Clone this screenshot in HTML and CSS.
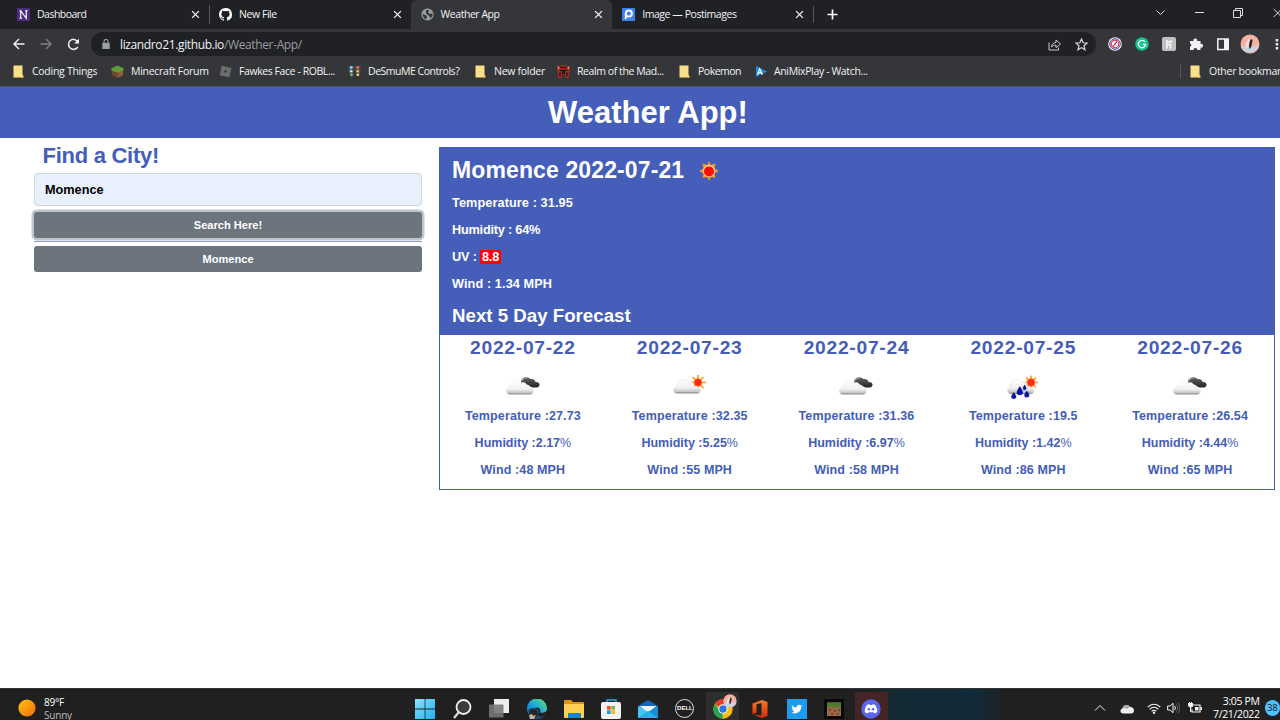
FILE: index.html
```html
<!DOCTYPE html>
<html lang="en">
<head>
<meta charset="utf-8">
<title>Weather App</title>
<link rel="stylesheet" href="styles.css">
</head>
<body>
<svg class="defs" width="0" height="0" aria-hidden="true">
  <defs>
    <linearGradient id="cloudFill" x1="0" y1="0" x2="0" y2="1"><stop offset="0" stop-color="#fff"/><stop offset=".6" stop-color="#f0f0f0"/><stop offset=".86" stop-color="#c8c8c8"/><stop offset="1" stop-color="#777"/></linearGradient>
    <linearGradient id="darkFill" x1="0" y1="0" x2="0" y2="1"><stop offset="0" stop-color="#666"/><stop offset="1" stop-color="#222"/></linearGradient>
    <linearGradient id="winFill" x1="0" y1="0" x2="1" y2="1"><stop offset="0" stop-color="#8be4fd"/><stop offset="1" stop-color="#1eaef2"/></linearGradient>
    <linearGradient id="sunFill" x1="0" y1="0" x2="1" y2="1"><stop offset="0" stop-color="#ffc60a"/><stop offset="1" stop-color="#f36a0c"/></linearGradient>
    <linearGradient id="edgeFill" x1="0" y1="1" x2="1" y2="0"><stop offset="0" stop-color="#0b62b8"/><stop offset=".5" stop-color="#1ba9df"/><stop offset="1" stop-color="#6be35f"/></linearGradient>
    <linearGradient id="officeFill" x1="0" y1="0" x2="0" y2="1"><stop offset="0" stop-color="#ff7a21"/><stop offset="1" stop-color="#d2290b"/></linearGradient>
    <symbol id="close" viewBox="0 0 8 8"><path d="M1 1l6 6M7 1L1 7" stroke="#f1f1f1" stroke-width="1.2"/></symbol>
    <symbol id="folder" viewBox="0 0 12 13"><path d="M1 .5h9v9.500l.8 1v1.500H1z" fill="#fbe08a"/><path d="M9.500 9.500l1.300 1v2H8.500z" fill="#f4c94f"/></symbol>
    <symbol id="avatar" viewBox="0 0 20 20"><circle cx="10" cy="10" r="9.500" fill="#f6b09f"/><path d="M.7 12.500C5 12 15 14 19 10.500A9.500 9.500 0 0 1 .7 12.500z" fill="#c8d2e2"/><path d="M5.500 13c0-4 2-7 4.500-9-.5 3-.5 7-3 10z" fill="#eee7e4"/><path d="M10.500 5.500c1.500-1 2.500.5 1.700 2.500-.6 2.500-.4 5-2.500 7-1-2-.8-6 .8-9.500z" fill="#26232a"/></symbol>
    <symbol id="cloudy" viewBox="0 0 36 24"><path d="M16 9a5.500 5.500 0 0 1 9.500-4c3-.5 5 1.200 5 3 2.700-.3 4.500 1.300 4 3.300-.4 2.200-3 2.500-5 2.100-3 .8-4.500-.8-6-2.300z" fill="url(#darkFill)"/><path d="M16.500 7a5 5 0 0 1 6-3" fill="none" stroke="#999" stroke-width="1.500"/><path d="M5 20.500C0 20.500-.2 14 4.500 13.800 4 8 12.500 4.800 15.500 9c4-2 6.500 1 6.500 3.500 3.500-.5 6.500 1 6.300 4.500 0 2-1.300 3.500-3.300 3.500z" fill="url(#cloudFill)" stroke="#ddd" stroke-width=".3"/></symbol>
    <symbol id="partly" viewBox="0 0 36 24"><g stroke="#ff9b1c" stroke-width="1.600"><path d="M26 1v15M18 8.500h16M20.500 3l11 11M31.500 3l-11 11"/></g><circle cx="26" cy="8.500" r="4" fill="#fd2b12" stroke="#ff9b1c" stroke-width=".7"/><path d="M5.500 19.500C.3 19.500.4 13.200 4.600 13 4.500 6.500 12.500 2.500 16.500 8c3.500-1 5.500 1.500 5.500 4 3 .2 6.500 1.200 6.300 4.500 0 2-1.300 3-3.300 3z" fill="url(#cloudFill)" stroke="#d5d5d5" stroke-width=".4"/></symbol>
    <symbol id="rainy" viewBox="0 0 36 28"><g stroke="#ff9b1c" stroke-width="1.600"><path d="M26 1.500v14M19 8.500h14M21 3.500l10 10M31 3.500l-10 10"/></g><circle cx="26" cy="8.500" r="4" fill="#fd2b12" stroke="#ff9b1c" stroke-width=".7"/><path d="M6.500 20C1.500 20 1.600 14 5 13.500 5 7 12 2.500 16.500 8c4-1 6 2 5.500 4.500 4 0 7 1.500 6.500 5 0 1.700-1.500 2.500-3.500 2.500z" fill="url(#cloudFill)" stroke="#d5d5d5" stroke-width=".4"/><path d="M14.800 12.500c4.500 6.500 3 8.500 0 8.500s-4.500-2 0-8.500zM8.800 18.500c3.500 4.500 2.500 6.300 0 6.300s-3.500-1.800 0-6.300zM21.800 17c3.500 4.500 2.500 6.300 0 6.300s-3.500-1.800 0-6.300zM19.600 11c2.500 3.500 1.500 4.800 0 4.800s-2.500-1.300 0-4.800z" fill="#0510a8" stroke="#020a60" stroke-width=".4"/></symbol>
  </defs>
</svg>
<div class="screen">
  <header class="browser">
    <div class="tabstrip">
      <div class="tab first">
        <svg class="fav" viewBox="0 0 14 14"><path d="M0 0h14v14H0z" fill="#4b2a80"/><path d="M2.500 3h2.300M4 3l6 8V3M8.600 3h3M4 3v8M2.500 11h3" stroke="#fff" stroke-width="1.200" fill="none"/></svg>
        <span class="label">Dashboard</span><svg class="x"><use href="#close"/></svg>
      </div>
      <div class="tab divided">
        <svg class="fav" viewBox="0 0 16 16"><path fill="#fff" d="M8 0C3.600 0 0 3.600 0 8c0 3.500 2.300 6.500 5.500 7.600.4.100.5-.2.500-.4v-1.400c-2.200.5-2.700-1-2.700-1-.4-1-.9-1.200-.9-1.200-.7-.5.1-.5.100-.5.800.1 1.200.8 1.200.8.700 1.300 1.900.9 2.300.7.100-.5.300-.9.500-1.100-1.800-.2-3.600-.9-3.600-4 0-.9.300-1.600.8-2.100-.1-.2-.4-1 .1-2.100 0 0 .7-.2 2.200.8a7.600 7.600 0 0 1 4 0c1.500-1 2.200-.8 2.200-.8.500 1.100.2 1.900.1 2.100.5.600.8 1.300.8 2.100 0 3.100-1.900 3.800-3.700 4 .3.300.6.800.6 1.500v2.200c0 .2.100.5.500.4A8 8 0 0 0 8 0z"/></svg>
        <span class="label">New File</span><svg class="x"><use href="#close"/></svg>
      </div>
      <div class="tab active">
        <svg class="fav globe" viewBox="0 0 14 14"><circle cx="7" cy="7" r="6.500" fill="#9aa0a6"/><path d="M2 6.500l3 1 1.500 1.500-1 3.300C3 11.500 1.500 9 2 6.500zM6 2l3 .8L7.500 5l2 1.200 2.800-.4c.5 2-.5 4-2 5.200L9 8.500 6 6.500 5 4z" fill="#35363a"/></svg>
        <span class="label">Weather App</span><svg class="x"><use href="#close"/></svg>
      </div>
      <div class="tab last">
        <svg class="fav" viewBox="0 0 14 14"><path d="M0 0h14v14H0z" fill="#3a81f0"/><circle cx="7.400" cy="6" r="3.300" fill="none" stroke="#fff" stroke-width="2"/><path d="M4 5.500v6.500" stroke="#fff" stroke-width="2"/></svg>
        <span class="label">Image — Postimages</span><svg class="x"><use href="#close"/></svg>
      </div>
      <div class="newtab"><svg width="11" height="11" viewBox="0 0 11 11"><path d="M5.500.5v10M.5 5.500h10" stroke="#fff" stroke-width="1.700"/></svg></div>
      <div class="winctl">
        <svg width="9" height="9" viewBox="0 0 9 9"><path d="M.5 2.500l4 4 4-4" fill="none" stroke="#ddd"/></svg>
        <svg width="9" height="9" viewBox="0 0 9 9"><path d="M0 4.500h9" stroke="#ddd"/></svg>
        <svg width="10" height="10" viewBox="0 0 10 10"><path d="M.5 2.500h7v7h-7zM2.500 2V.5h7v7H8" fill="none" stroke="#ddd"/></svg>
        <svg width="10" height="10" viewBox="0 0 10 10"><path d="M.7 1l8 8M8.700 1l-8 8" stroke="#ddd"/></svg>
      </div>
    </div>
    <div class="toolbar">
      <div class="nav">
        <svg width="12" height="12" viewBox="0 0 12 12"><path d="M11.500 6H1.500M6 1L1 6l5 5" fill="none" stroke="#f1f3f4" stroke-width="1.400"/></svg>
        <svg width="12" height="12" viewBox="0 0 12 12"><path d="M.5 6h10M6 1l5 5-5 5" fill="none" stroke="#808286" stroke-width="1.300"/></svg>
        <svg width="13" height="13" viewBox="0 0 13 13"><path d="M10.800 9A5 5 0 1 1 10.500 3.300" fill="none" stroke="#f1f3f4" stroke-width="1.500"/><path d="M12 .7v4.800H7.200z" fill="#f1f3f4"/></svg>
      </div>
      <div class="omnibox">
        <svg width="8" height="10" viewBox="0 0 8 10"><path d="M.3 3.800h7.400V10H.3z" fill="#9aa0a6"/><path d="M2 4V2.500a2 2 0 0 1 4 0V4" fill="none" stroke="#9aa0a6" stroke-width="1.100"/></svg>
        <span class="url">lizandro21.github.io<span class="path">/Weather-App/</span></span>
        <svg class="share" width="13" height="13" viewBox="0 0 13 13"><path d="M1 4.500V12h9.500V9.500M3.500 9C3.700 6 5.500 4.600 8 4.600V2l4.500 4L8 9.700V7.200C6 7.200 4.600 7.700 3.500 9z" fill="none" stroke="#c8cacd"/></svg>
        <svg width="13" height="13" viewBox="0 0 13 13"><path d="M6.500 1l1.600 3.800 4 .3L9 7.800l1 4-3.500-2.200L3 11.800l1-4L.9 5.100l4-.3z" fill="none" stroke="#dadce0" stroke-width="1.200"/></svg>
      </div>
      <div class="exts">
        <svg viewBox="0 0 14 14"><circle cx="7" cy="7" r="6.800" fill="#fff"/><circle cx="7" cy="7" r="5.300" fill="#fff" stroke="#31409b" stroke-width="1"/><path d="M4.800 9.600l4.400-5.200" stroke="#e12b52" stroke-width="1.400"/><circle cx="7" cy="7" r="3.800" fill="none" stroke="#e12b52" stroke-width="1.200"/></svg>
        <svg viewBox="0 0 14 14"><circle cx="7" cy="7" r="6.800" fill="#14c28e"/><path d="M10 4.800A3.700 3.700 0 1 0 10.700 7.500H7.800" fill="none" stroke="#fff" stroke-width="1.300"/></svg>
        <svg viewBox="0 0 14 14"><rect width="14" height="14" rx="2" fill="#c0c0c0"/><path d="M5 3v8.500M5 7.500h3.500v4M5.500 5H10M9 3.500v1.800" stroke="#f6f6f6" stroke-width="1.500" fill="none"/></svg>
        <svg viewBox="0 0 14 14"><path d="M1 4h3.500a1.900 1.900 0 1 1 3.600 0h3.400v3a1.900 1.900 0 1 1 0 3.500V13H8.300a1.900 1.900 0 0 0-3.800 0H1V9.700a1.700 1.700 0 0 0 0-3.300z" fill="#f1f3f4"/></svg>
        <svg viewBox="0 0 14 14"><path d="M1.800 2h10.400v10.400H1.800z" fill="none" stroke="#f1f3f4" stroke-width="1.500"/><path d="M8 2h5v10.500H8z" fill="#f1f3f4"/></svg>
        <svg class="me"><use href="#avatar"/></svg>
        <svg class="dots" viewBox="0 0 4 14"><path d="M.7 2h2.500v2.500H.7zM.7 6h2.500v2.500H.7zM.7 10h2.500v2.500H.7z" fill="#e8eaed"/></svg>
      </div>
    </div>
    <nav class="bookmarks">
      <div class="bm b1"><svg><use href="#folder"/></svg><span>Coding Things</span></div>
      <div class="bm b2"><svg viewBox="0 0 14 14"><path d="M1 4l6 3v7l-6-3z" fill="#70482d"/><path d="M13 4L7 7v7l6-3z" fill="#8e5d3c"/><path d="M7 .5L13.500 3.500v2.300L7 8 .5 5.800V3.500z" fill="#5e9d35"/></svg><span>Minecraft Forum</span></div>
      <div class="bm b3"><svg viewBox="0 0 14 14"><path d="M3 .8l10.500 2.500-2.500 10L.7 11z" fill="#6d6e70"/><path d="M6.200 5.700l2.200.5-.5 2.200-2.200-.5z" fill="#2c2d30"/></svg><span>Fawkes Face - ROBL...</span></div>
      <div class="bm b4"><svg viewBox="0 0 14 14"><path d="M.5 1h6v5.500l-1 6h-3l-2-6zM7.500 1h6v5.500l-1 6h-3l-2-6z" fill="#4b4d50"/><circle cx="3.500" cy="2.800" r="1.600" fill="#6fd5f5"/><circle cx="10.500" cy="2.800" r="1.600" fill="#f8594f"/><circle cx="3.500" cy="6.800" r="1.400" fill="#ddd"/><circle cx="10.500" cy="6.800" r="1.400" fill="#ffb647"/><circle cx="3.800" cy="10.600" r="1.400" fill="#68cf71"/><circle cx="10.500" cy="10.600" r="1.400" fill="#e3d665"/></svg><span>DeSmuME Controls?</span></div>
      <div class="bm b5"><svg><use href="#folder"/></svg><span>New folder</span></div>
      <div class="bm b6"><svg viewBox="0 0 14 14"><path d="M0 1h3l1-1h6l1 1h3v5l-1 1v7h-4v-3H5v3H1V7L0 6z" fill="#a12d21"/><path d="M3 2h8v1H3zM3 5h8v1.500H8.500V10h-3V6.500H3zM2.500 8h1.500v4H2.500zM10 8h1.500v4H10z" fill="#231314"/><path d="M1 2h1.500v2H1zM11.500 2H13v2h-1.500z" fill="#d8a08c"/></svg><span>Realm of the Mad...</span></div>
      <div class="bm b7"><svg><use href="#folder"/></svg><span>Pokemon</span></div>
      <div class="bm b8"><svg viewBox="0 0 14 14"><path d="M0 1l12 6-12 6z" fill="#168cf0"/><path d="M1.500 10.500L4 4l3 6.500M2.500 8.500h3.500" stroke="#fff" stroke-width="1.300" fill="none"/></svg><span>AniMixPlay - Watch...</span></div>
      <div class="bm other"><svg><use href="#folder"/></svg><span>Other bookmarks</span></div>
    </nav>
  </header>

  <main class="page">
    <h1 class="title">Weather App!</h1>
    <div class="content">
      <aside class="search">
        <h2 class="find">Find a City!</h2>
        <input class="city" type="text" value="Momence" aria-label="City">
        <button class="btn focus">Search Here!</button>
        <div class="rule"></div>
        <button class="btn history">Momence</button>
      </aside>
      <section class="weather">
        <div class="today">
          <h2 class="place"><span>Momence 2022-07-21</span>
            <svg width="20" height="20" viewBox="0 0 20 20"><path d="M10 0l1.800 4 4.700-1.500L15.500 7.500 20 10l-4.500 2.500 1 4.500-4.700-1-1.800 4-1.800-4-4.700 1 1-4.500L0 10l4.500-2.500-1-5L8.200 4z" fill="#f49a2a"/><circle cx="10" cy="10" r="6" fill="#ffd88c"/><circle cx="10" cy="10.400" r="5" fill="#fb0c04"/></svg>
          </h2>
          <p>Temperature : 31.95</p>
          <p class="hum">Humidity : 64%</p>
          <p class="uvline">UV : <span class="uv">8.8</span></p>
          <p>Wind : 1.34 MPH</p>
          <h3 class="next">Next 5 Day Forecast</h3>
        </div>
        <div class="forecast">
          <article class="day"><h3>2022-07-22</h3><svg><use href="#cloudy"/></svg><p>Temperature :27.73</p><p class="hum">Humidity :2.17<span class="pct">%</span></p><p>Wind :48 MPH</p></article>
          <article class="day"><h3>2022-07-23</h3><svg><use href="#partly"/></svg><p>Temperature :32.35</p><p class="hum">Humidity :5.25<span class="pct">%</span></p><p>Wind :55 MPH</p></article>
          <article class="day"><h3>2022-07-24</h3><svg><use href="#cloudy"/></svg><p>Temperature :31.36</p><p class="hum">Humidity :6.97<span class="pct">%</span></p><p>Wind :58 MPH</p></article>
          <article class="day"><h3>2022-07-25</h3><svg class="rain"><use href="#rainy"/></svg><p>Temperature :19.5</p><p class="hum">Humidity :1.42<span class="pct">%</span></p><p>Wind :86 MPH</p></article>
          <article class="day"><h3>2022-07-26</h3><svg><use href="#cloudy"/></svg><p>Temperature :26.54</p><p class="hum">Humidity :4.44<span class="pct">%</span></p><p>Wind :65 MPH</p></article>
        </div>
      </section>
    </div>
  </main>

  <footer class="taskbar">
    <div class="widget">
      <svg width="18" height="18" viewBox="0 0 18 18"><circle cx="9" cy="9" r="8.600" fill="url(#sunFill)"/></svg>
      <div class="temp"><span>89°F</span><span class="dim">Sunny</span></div>
    </div>
    <div class="apps">
      <div class="app"><svg viewBox="0 0 20 20"><path d="M0 0h9.600v9.600H0zM10.400 0H20v9.600h-9.600zM0 10.400h9.600V20H0zM10.400 10.400H20V20h-9.600z" fill="url(#winFill)"/></svg></div>
      <div class="app"><svg viewBox="0 0 20 20"><circle cx="11.500" cy="8" r="7" fill="#3c3c3c" stroke="#eee" stroke-width="1.800"/><path d="M6.500 13.500L2 19" stroke="#ddd" stroke-width="2.200"/></svg></div>
      <div class="app"><svg viewBox="0 0 20 20"><path d="M5 0h15v14H5z" fill="#eee"/><path d="M0 5.500h14.500v13H0z" fill="#777" fill-opacity=".9"/></svg></div>
      <div class="app"><svg viewBox="0 0 20 20"><path d="M0 10a10 10 0 0 1 20-1c.3 4-3 5.500-7 4.500 1-2 0-5-3-5-4 0-4.500 5-1.500 10C3.500 18 0 15 0 10z" fill="url(#edgeFill)"/><path d="M1 11c5-4 9-2 11 1l-1 5c3 1.500 5 0 7-1-2 3-5 4-8 4H2l2-3z" fill="#254b72"/><path d="M2 12l3-2 5 1 1 4-2 4H3l-1-3z" fill="#282527"/><path d="M2 16l3-1 1 2 3-1-2 4H3z" fill="#cbb3ac"/></svg></div>
      <div class="app"><svg viewBox="0 0 20 20"><path d="M0 2q0-1 1-1h6l2 2h10q1 0 1 1v5H0z" fill="#d99512"/><path d="M0 5h20v13q0 1-1 1H1q-1 0-1-1z" fill="#ffd052"/><path d="M4 19v-4q0-1 1-1h11q1 0 1 1v4z" fill="#1982d1"/></svg></div>
      <div class="app"><svg viewBox="0 0 20 20"><path d="M6 5V1h9v4" fill="none" stroke="#2aaadd" stroke-width="1.300"/><rect y="3" width="20" height="17" rx="2" fill="#f2f2f2"/><path d="M6 7h3.700v3.700H6z" fill="#f05125"/><path d="M10.300 7H14v3.700h-3.700z" fill="#7eb93b"/><path d="M6 11.300h3.700V15H6z" fill="#149fdf"/><path d="M10.300 11.300H14V15h-3.700z" fill="#fbb911"/></svg></div>
      <div class="app"><svg viewBox="0 0 20 20"><path d="M0 7l10-6 10 6v12H0z" fill="#1565b4"/><path d="M1.500 7h17L10 14z" fill="#f0f5f8"/><path d="M0 7l10 6L0 19z" fill="#4cc4f1"/><path d="M20 7l-10 6 10 6z" fill="#178bdc"/><path d="M0 19l10-7 10 7z" fill="#32aae8"/></svg></div>
      <div class="app"><div class="dell">DELL</div></div>
      <div class="app open"><svg viewBox="0 0 20 20"><circle cx="10" cy="10" r="9.700" fill="#fbc116"/><path d="M10 10L1.600 5.200A9.700 9.700 0 0 1 18.400 5.200z" fill="#e63c30"/><path d="M10 10H6L1.600 5.200A9.700 9.700 0 0 0 9.500 19.700z" fill="#29a350"/><circle cx="10" cy="10" r="4.700" fill="#fff"/><circle cx="10" cy="10" r="3.700" fill="#2e73e2"/></svg><svg class="badge"><use href="#avatar"/></svg></div>
      <div class="app"><svg viewBox="0 0 20 20"><path d="M2.500 4.500L12 1l5.500 2v14L12 19l-9-3.500 8.500 1V4L6.500 5.200v8.600L2.500 15z" fill="url(#officeFill)"/></svg></div>
      <div class="app"><svg viewBox="0 0 20 20"><path d="M0 0h20v20H0z" fill="#1b9cf0"/><path d="M15.500 6.200l-1.200 1.400c.1 5.300-5.400 8.500-9.700 5.900 1.300 0 2.300-.3 3-.8-1.100-.2-1.700-.8-1.900-1.500h.8c-1-.4-1.600-1.100-1.600-2.100l.8.200C4.600 8.300 4.500 7.200 5 6.300c1.200 1.400 2.700 2.200 4.700 2.300-.4-2.600 2.300-3.800 4-2.200z" fill="#fff"/></svg></div>
      <div class="app"><svg viewBox="0 0 20 20"><path d="M0 0h20v20H0z" fill="#080808"/><path d="M3 3.500h14v13.500H3z" fill="#9a6748"/><path d="M3 3.500h14v4h-2v1.500h-2V7.500h-2V9H8.500V7.500h-2V9H5V8H3z" fill="#4d7c2c"/><path d="M5 10h2v2H5zM10 11h2v2h-2zM14 10h2v2h-2zM7 14h2v2H7zM13 14h2v2h-2z" fill="#704830"/></svg></div>
      <div class="app alert"><svg viewBox="0 0 20 20"><circle cx="10" cy="10" r="9.700" fill="#5966ee"/><path d="M6 5.800l2.500-.6.6.9h1.800l.6-.9 2.500.6c1.500 2.300 2.600 4.500 2.200 7.200-1 .9-2 1.200-2.800 1.400l-.8-1.200H7.400l-.8 1.200c-.8-.2-1.800-.5-2.800-1.400C3.500 10.300 4.500 8.100 6 5.800z" fill="#fff"/><circle cx="7.900" cy="10.300" r="1.200" fill="#5966ee"/><circle cx="12.100" cy="10.300" r="1.200" fill="#5966ee"/></svg></div>
    </div>
    <div class="tray">
      <svg class="chev" width="12" height="8" viewBox="0 0 12 8"><path d="M1 6.500l5-5 5 5" fill="none" stroke="#eee"/></svg>
      <svg class="onedrive" width="14" height="10" viewBox="0 0 14 10"><path d="M3.500 9.500C-.5 9.500-.2 5 2.500 4.500 3 1 7.500-.5 10 3c3 0 4 2 4 3.500 0 2-1.200 3-3 3z" fill="#eee"/><path d="M2.500 4.500C3 1 7.500-.5 10 3 8.500 3 8 4 7.500 5 6 4 4 4 2.500 4.500z" fill="#aaa"/></svg>
      <svg class="wifi" width="14" height="11" viewBox="0 0 14 11"><path d="M.7 4.200c3.500-4 9-4 12.600 0M2.700 6.300c2.500-2.800 6-2.800 8.600 0M4.700 8.300c1.300-1.400 3.300-1.400 4.600 0" fill="none" stroke="#f4f4f4" stroke-width="1.100"/><circle cx="7" cy="9.700" r="1.200" fill="#f4f4f4"/></svg>
      <svg class="vol" width="13" height="12" viewBox="0 0 13 12"><path d="M.6 4v4h2.500L6 10.700V1.300L3.100 4zM7.700 4q1.500 2 0 4" fill="none" stroke="#f4f4f4"/><path d="M9.500 2.500q3 3.500 0 7M11 1q4 5 0 10" fill="none" stroke="#777" stroke-width=".8"/></svg>
      <svg class="bat" width="14" height="12" viewBox="0 0 14 12"><path d="M5 3h7v7H4V7.500" fill="none" stroke="#f4f4f4" stroke-width="1.200"/><path d="M7 5h3.500v3.500H7zM12.500 5H14v3h-1.500zM0 1h1V0h1v1h1V0h1v1h1v3.500L3.200 5.500V10H2V5.500L0 4z" fill="#f4f4f4"/></svg>
      <div class="clock"><span>3:05 PM</span><span>7/21/2022</span></div>
      <div class="count">38</div>
    </div>
  </footer>
</div>
</body>
</html>
```

FILE: styles.css
```css
* { box-sizing: border-box; }
body { margin: 0; background: #fff; font-family: "Liberation Sans", Arial, sans-serif; }
h1, h2, h3, p { margin: 0; }
svg { display: block; flex: none; }
.defs { position: absolute; }
.screen { width: 1280px; height: 720px; overflow: hidden; display: flex; flex-direction: column; }

/* browser chrome */
.browser { height: 87px; flex: none; background: #35363a; border-bottom: 1px solid #54565b; color: #f1f3f4; font: 10.5px/14px "Open Sans", "Noto Sans", sans-serif; white-space: nowrap; }
.tabstrip { height: 29px; background: #202124; display: flex; }
.tab { width: 201.600px; display: flex; align-items: center; padding: 0 9px 1px 11px; }
.first { width: 209px; padding-left: 17px; padding-right: 9px; }
.divided { border-left: 1px solid #4a4c50; padding-left: 9px; border-image: linear-gradient(transparent 20%, #55575b 20%, #55575b 80%, transparent 80%) 1; }
.active { background: #35363a; border-radius: 6px 6px 0 0; padding-left: 10px; }
.last { padding-left: 10px; width: 201px; }
.fav { width: 13px; height: 13px; margin-right: 7px; }
.label { flex: 1; letter-spacing: -.46px; }
.active .label { letter-spacing: -.46px; }
.divided .label, .last .label { letter-spacing: -.44px; }
.first .label { letter-spacing: -.52px; }
.x { width: 9px; height: 9px; }
.newtab { width: 40px; height: 17px; margin: 6px 0 0; padding: 3px 0 0 13px; border-left: 1px solid #55575b; }
.winctl { margin-left: auto; width: 124px; display: flex; gap: 29.500px; padding-top: 8px; }
.toolbar { height: 30px; display: flex; align-items: center; }
.nav { width: 91px; display: flex; gap: 15px; padding-left: 13px; }
.omnibox { width: 1005px; height: 24px; border-radius: 12px; background: #202124; display: flex; align-items: center; padding: 0 8px 0 11px; font-size: 12px; }
.url { flex: 1; margin-left: 10px; letter-spacing: -.37px; line-height: 16px; padding-top: 1px; }
.path { color: #9a9ca0; }
.share { margin-right: 14px; }
.exts { display: flex; align-items: center; gap: 13px; padding-left: 12px; }
.exts svg { width: 14px; height: 14px; }
.exts .me { width: 20px; height: 20px; margin-left: -3px; }
.exts .dots { width: 4px; margin-left: 2px; }
.bookmarks { height: 27px; display: flex; align-items: center; padding: 0 0 3px 12px; }
.bm { flex: none; display: flex; align-items: center; letter-spacing: -.28px; }
.bm svg { width: 13px; height: 13px; margin-right: 7px; }
.b1 { width: 99px; }
.b2 { width: 108px; }
.b3 { width: 129px; letter-spacing: -.42px; }
.b4 { width: 126px; letter-spacing: -.48px; }
.b5 { width: 83px; }
.b6 { width: 121px; letter-spacing: -.42px; }
.b7 { width: 78px; letter-spacing: -.5px; }
.b8 { width: 424px; letter-spacing: -.36px; }
.b8 svg { margin-right: 5px; }
.other { border-left: 1px solid #55575b; padding-left: 8px; }

/* page */
.page { flex: 1; min-height: 0; color: #435db8; font-weight: 700; }
.title { height: 50.500px; background: #445eb9; color: #fff; font-size: 31px; line-height: 51px; text-align: center; padding-left: 16px; }
.content { display: flex; padding: 0 5.500px 0 34px; }
.search { width: 388px; margin-right: 16.500px; }
.find { font-size: 22px; line-height: 28px; height: 35.500px; padding: 4px 0 0 8.500px; letter-spacing: -.27px; }
.city { display: block; width: 100%; height: 33px; border: 1px solid #ced4da; border-radius: 4px; background: #e8f0fe; padding: 0 10px; font: 700 12.700px "Liberation Sans", Arial, sans-serif; color: #000; }
.btn { display: block; width: 100%; height: 26px; border: 0; border-radius: 3px; background: #6c757d; color: #fff; font: 700 11.100px "Liberation Sans", Arial, sans-serif; }
.focus { margin-top: 6px; box-shadow: 0 0 0 2.500px #c0c5c9; }
.rule { height: 1px; background: #8c9cd3; margin: 3px 0 3.500px; }
.weather { flex: 1; margin-top: 9px; height: 343.500px; border: 1.500px solid #445eb9; }
.today { height: 187px; background: #445eb9; color: #fff; padding: 8px 0 0 12.500px; font-size: 12.700px; letter-spacing: .1px; }
.place { display: flex; font-size: 23px; line-height: 29px; height: 34.500px; letter-spacing: .12px; }
.place svg { margin: 5px 0 0 15px; }
.today p { height: 27px; line-height: 27px; }
.today .hum { letter-spacing: -.2px; }
.uv { background: #f00; border-radius: 1px; padding: 0 1.500px; }
.uvline { letter-spacing: -.1px; }
.next { font-size: 18.700px; line-height: 36px; letter-spacing: 0; }
.forecast { display: flex; }
.day { flex: 1; display: flex; flex-direction: column; align-items: center; font-size: 12.500px; letter-spacing: .12px; }
.day .hum { letter-spacing: 0; }
.day h3 { font-size: 19.200px; line-height: 25px; letter-spacing: .75px; }
.day svg { width: 36px; height: 24px; margin: 14px 0 5px; }
.day .rain { height: 28px; margin-bottom: 1px; }
.day p { height: 27px; line-height: 27px; }
.pct { font-weight: 400; }

/* taskbar */
.taskbar { height: 32px; flex: none; display: flex; background: linear-gradient(90deg, #202020 0 850px, #142b36 905px, #112a38 975px, #202020 1005px); border-top: 1px solid #333; color: #fff; font: 10px/13px "Open Sans", "Noto Sans", sans-serif; white-space: nowrap; }
.widget { width: 406.500px; display: flex; padding: 10px 0 0 18px; }
.temp { display: flex; flex-direction: column; margin: -3px 0 0 8px; letter-spacing: -.2px; }
.dim { color: #bbb; }
.apps { display: flex; }
.app { width: 37.200px; padding: 10px 0 0 8.600px; position: relative; }
.app svg { width: 20px; height: 20px; }
.open { background: linear-gradient(#2e2e2e, #2e2e2e) 2px 3px / 33px 40px no-repeat; }
.alert { background: linear-gradient(#432526, #432526) 2px 3px / 33px 40px no-repeat; }
.app .badge { position: absolute; left: 19px; top: 5px; width: 14px; height: 14px; }
.dell { width: 19px; height: 19px; border: 1px solid #ddd; border-radius: 50%; font: 700 6px/17px "Liberation Sans", Arial, sans-serif; text-align: center; }
.tray { margin-left: auto; width: 186px; display: flex; padding-top: 15px; }
.onedrive { margin-left: 14px; }
.wifi { margin: -1px 0 0 13px; }
.vol { margin: -2px 0 0 6px; }
.bat { margin: -2px 0 0 8px; }
.clock { width: 60px; display: flex; flex-direction: column; align-items: flex-end; margin-top: -9px; font-size: 10.500px; letter-spacing: -.35px; }
.count { width: 16px; height: 16px; margin: -4px 0 0 5px; border-radius: 50%; background: #4cc2ff; color: #111; text-align: center; line-height: 16px; font-size: 9.500px; }
```
